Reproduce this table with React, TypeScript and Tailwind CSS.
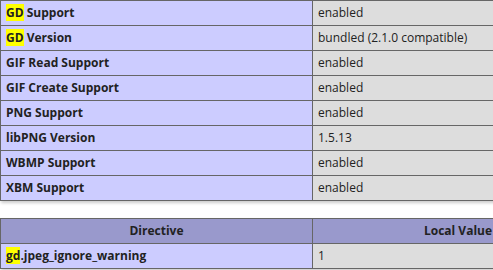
const gdRows: [string, string, boolean][] = [
  ['GD Support', 'enabled', true],
  ['GD Version', 'bundled (2.1.0 compatible)', true],
  ['GIF Read Support', 'enabled', false],
  ['GIF Create Support', 'enabled', false],
  ['PNG Support', 'enabled', false],
  ['libPNG Version', '1.5.13', false],
  ['WBMP Support', 'enabled', false],
  ['XBM Support', 'enabled', false],
]

const cell = 'border border-[#666] px-[5px] py-1 leading-[16px] h-[25px] align-baseline'
const eCell = `${cell} bg-[#ccf] w-[312px] font-bold text-left`
const vCell = `${cell} bg-[#ddd] text-left`

function Mark({ children }: { children: string }) {
  return <span className="bg-[#ffff00]">{children}</span>
}

export default function App() {
  return (
    <div
      className="w-[493px] h-[270px] overflow-hidden bg-white text-[#222] text-[12px]"
      style={{ fontFamily: '"Open Sans", "DejaVu Sans", sans-serif' }}
    >
      <table className="w-[934px] border-collapse shadow-[1px_2px_3px_#ccc]">
        <tbody>
          {gdRows.map(([name, value, hl]) => (
            <tr key={name}>
              <td className={eCell}>
                {hl ? (
                  <>
                    <Mark>GD</Mark>
                    {name.slice(2)}
                  </>
                ) : (
                  name
                )}
              </td>
              <td className={vCell}>{value}</td>
            </tr>
          ))}
        </tbody>
      </table>

      <table className="w-[934px] border-collapse shadow-[1px_2px_3px_#ccc] mt-[17px]">
        <tbody>
          <tr>
            <th className={`${cell} bg-[#99c] font-bold w-[312px] text-center`}>Directive</th>
            <th className={`${cell} bg-[#99c] font-bold w-[291px] text-center`}>Local Value</th>
            <th className={`${cell} bg-[#99c] font-bold text-center`}>Master Value</th>
          </tr>
          <tr>
            <td className={eCell}>
              <Mark>gd</Mark>.jpeg_ignore_warning
            </td>
            <td className={vCell}>1</td>
            <td className={vCell}>1</td>
          </tr>
        </tbody>
      </table>
    </div>
  )
}
